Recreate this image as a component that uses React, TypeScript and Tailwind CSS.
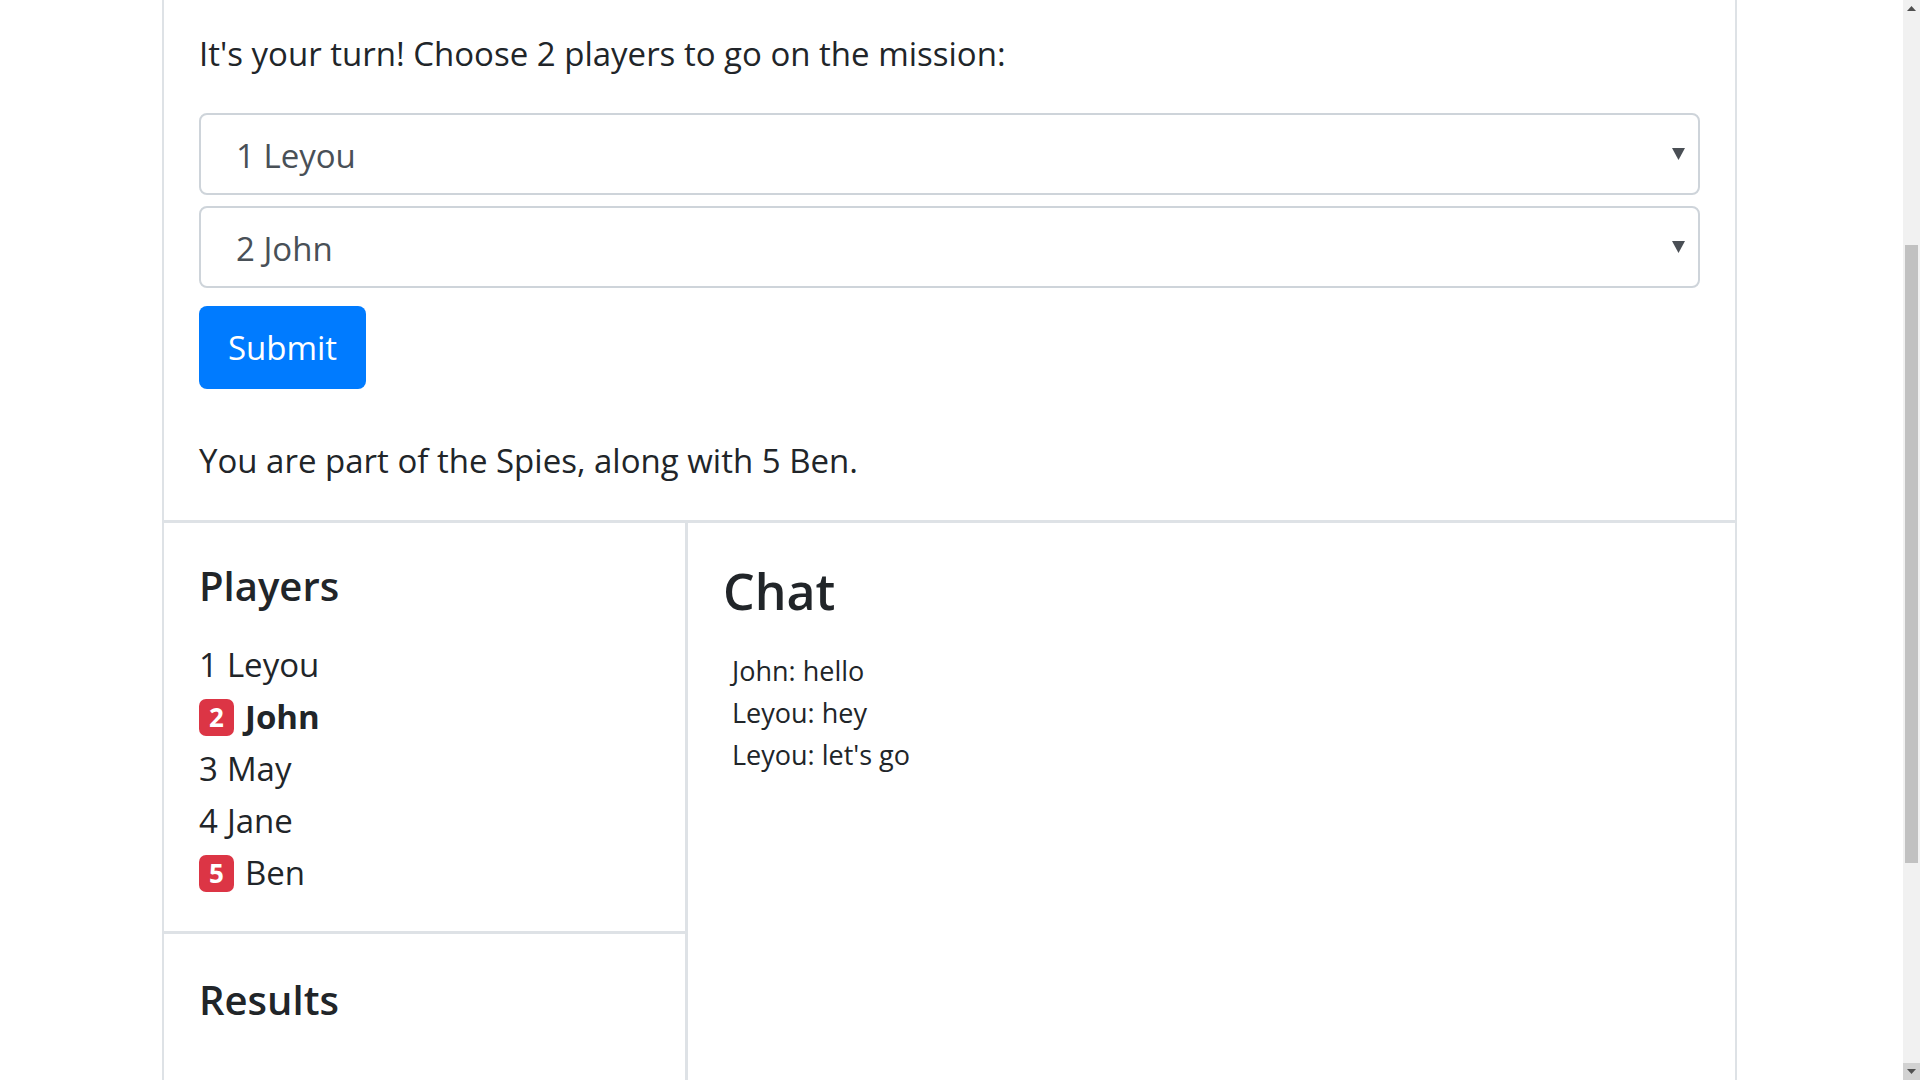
import { useState } from "react";

const players = [
  { seat: 1, name: "Leyou", spy: false, me: false },
  { seat: 2, name: "John", spy: true, me: true },
  { seat: 3, name: "May", spy: false, me: false },
  { seat: 4, name: "Jane", spy: false, me: false },
  { seat: 5, name: "Ben", spy: true, me: false },
];

const messages = ["John: hello", "Leyou: hey", "Leyou: let's go"];

function PlayerSelect({ value }: { value: number }) {
  const [picked, setPicked] = useState(value);
  return (
    <div className="relative">
      <select
        value={picked}
        onChange={(e) => setPicked(Number(e.target.value))}
        className="w-full h-[82px] appearance-none rounded-[8px] border-2 border-[#ced4da] bg-white pl-[35px] pr-12 pt-[4px] text-[33px] text-[#495057] outline-none"
      >
        {players.map((p) => (
          <option key={p.seat} value={p.seat}>
            {p.seat} {p.name}
          </option>
        ))}
      </select>
      {/* native-looking dropdown caret */}
      <svg
        className="pointer-events-none absolute right-[15px] top-1/2 -translate-y-1/2"
        width="13"
        height="12"
        viewBox="0 0 13 12"
      >
        <path d="M0 0h13L6.5 12z" fill="#4a4f55" />
      </svg>
    </div>
  );
}

function Scrollbar() {
  return (
    <div className="w-[17px] h-screen shrink-0 flex flex-col bg-[#f1f1f1]">
      <div className="h-[17px] flex items-center justify-center">
        <svg width="9" height="5" viewBox="0 0 9 5">
          <path d="M0 5L4.5 0L9 5z" fill="#505050" />
        </svg>
      </div>
      <div className="flex-1">
        <div className="mt-[228px] mx-[2px] h-[618px] bg-[#c1c1c1]" />
      </div>
      <div className="h-[17px] flex items-center justify-center bg-[#d2d2d2]">
        <svg width="9" height="5" viewBox="0 0 9 5">
          <path d="M0 0h9L4.5 5z" fill="#505050" />
        </svg>
      </div>
    </div>
  );
}

export default function App() {
  return (
    <div
      className="flex h-screen overflow-hidden bg-white text-[#212529]"
      style={{ fontFamily: '"Open Sans", "Noto Sans", sans-serif' }}
    >
      <div className="flex-1 overflow-hidden">
        <div className="ml-[162px] w-[1575px] h-full flex flex-col border-x-2 border-[#dee2e6]">
          {/* Mission pick */}
          <div className="px-[35px] pt-[28px] pb-[33px] border-b-[3px] border-[#dee2e6]">
            <p className="text-[33px] leading-[52px]">
              It's your turn! Choose 2 players to go on the mission:
            </p>
            <div className="mt-[33px] flex flex-col gap-[11px]">
              <PlayerSelect value={1} />
              <PlayerSelect value={2} />
            </div>
            <button className="mt-[18px] h-[83px] w-[167px] rounded-[8px] bg-[#007bff] text-[33px] text-white">
              Submit
            </button>
            <p className="mt-[46px] text-[33px] leading-[52px]">
              You are part of the Spies, along with 5 Ben.
            </p>
          </div>

          <div className="flex flex-1">
            {/* Left column */}
            <div className="w-[524px] shrink-0 border-r-[3px] border-[#dee2e6] flex flex-col">
              <div className="px-[35px] pt-[36px] pb-[32px] border-b-[3px] border-[#dee2e6]">
                <h5 className="text-[40px] leading-[53px] font-semibold">Players</h5>
                <ul className="mt-[27px]">
                  {players.map((p) => (
                    <li key={p.seat} className="flex items-center h-[52px] text-[33px]">
                      {p.spy ? (
                        <span className="mr-[11px] inline-flex h-[37px] w-[35px] items-center justify-center rounded-[7px] bg-[#dc3545] text-[26px] font-bold leading-none text-white">
                          {p.seat}
                        </span>
                      ) : (
                        <span className="mr-[9px]">{p.seat}</span>
                      )}
                      <span className={p.me ? "font-bold" : ""}>{p.name}</span>
                    </li>
                  ))}
                </ul>
              </div>
              <div className="px-[35px] pt-[39px]">
                <h5 className="text-[40px] leading-[53px] font-semibold">Results</h5>
              </div>
            </div>

            {/* Chat */}
            <div className="flex-1 pl-[35px] pr-[37px] pt-[37px]">
              <h4 className="text-[50px] leading-[63px] font-semibold">Chat</h4>
              <ul className="mt-[27px] pl-[9px]">
                {messages.map((m, i) => (
                  <li key={i} className="text-[27px] leading-[42px]">
                    {m}
                  </li>
                ))}
              </ul>
            </div>
          </div>
        </div>
      </div>
      <Scrollbar />
    </div>
  );
}
